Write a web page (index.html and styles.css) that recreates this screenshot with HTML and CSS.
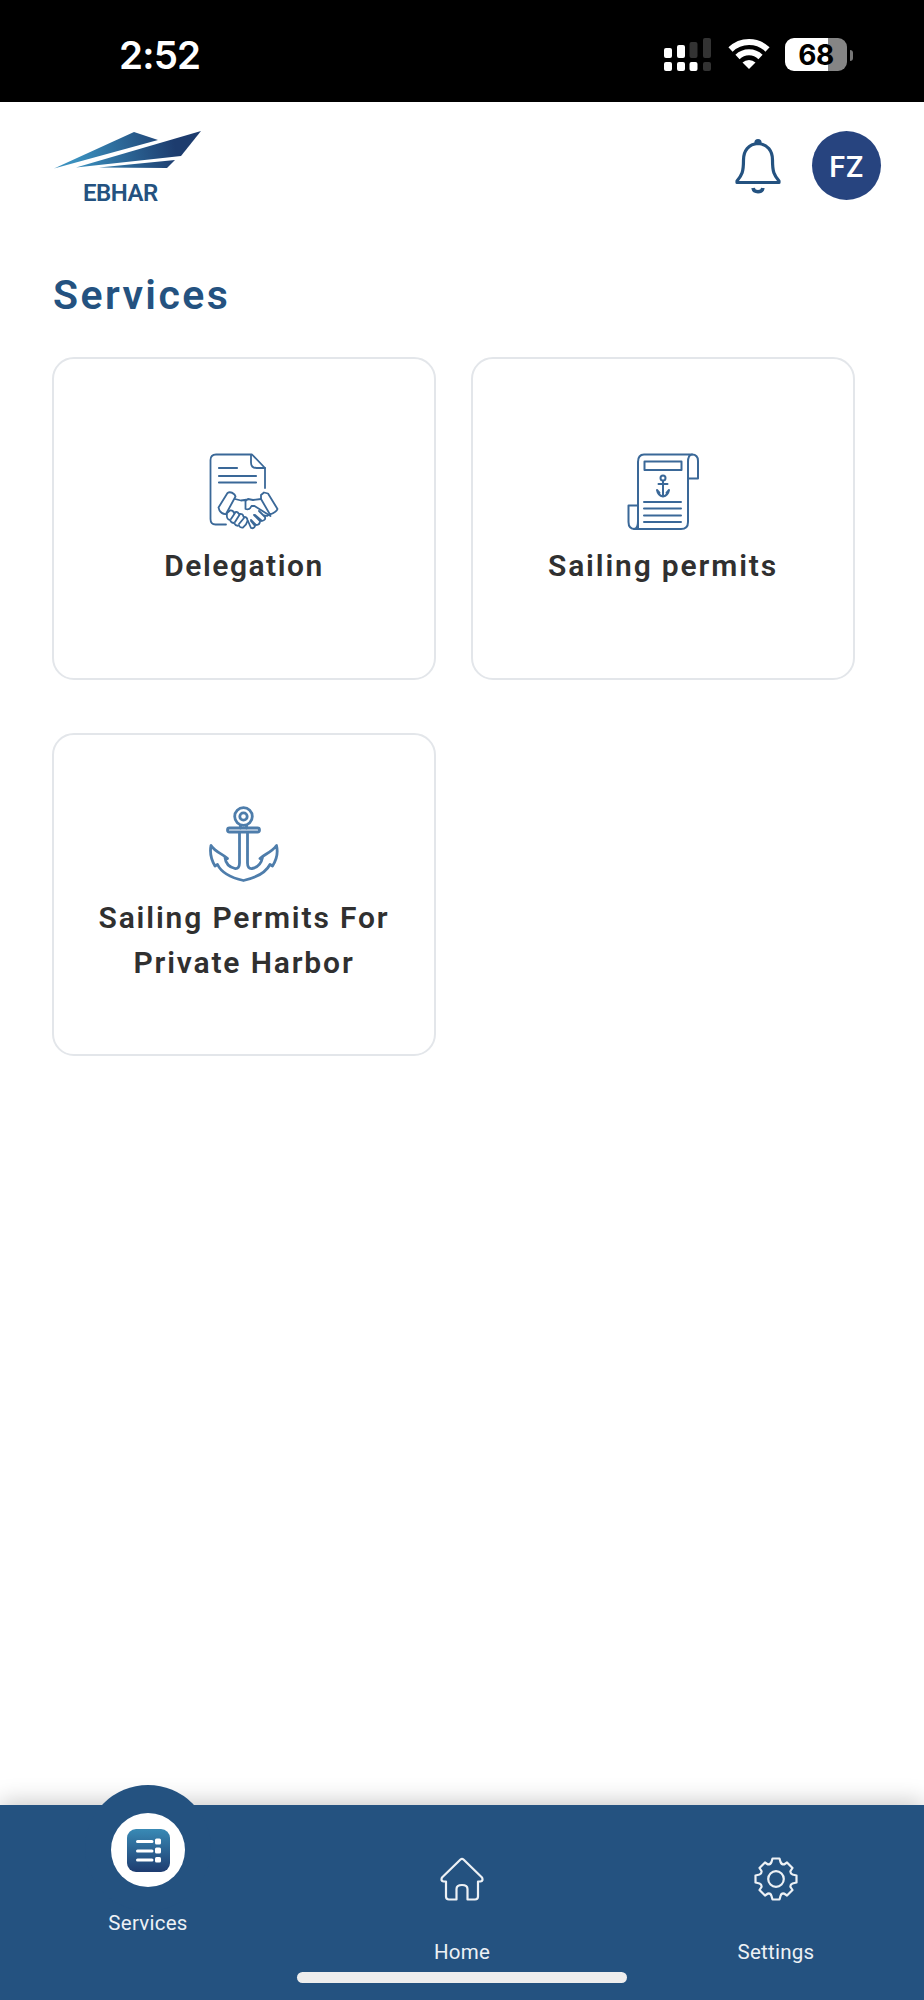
FILE: index.html
```html
<!DOCTYPE html>
<html lang="en">
<head>
<meta charset="utf-8">
<title>Ebhar – Services</title>
<link rel="stylesheet" href="styles.css">
</head>
<body>
<div class="screen">
  <div class="status">
    <span class="clock">2:52</span>
    <div class="indicators">
      <svg class="signal" width="48" height="34" viewBox="0 0 48 34">
        <g fill="#fff"><rect x="0" y="10" width="8" height="10" rx="2"/><rect x="13" y="7" width="8" height="13" rx="2"/><rect x="0" y="24" width="8" height="9" rx="2"/><rect x="13" y="24" width="8" height="9" rx="2"/><rect x="25.500" y="24" width="8" height="9" rx="2"/></g>
        <g fill="#333"><rect x="25.500" y="4" width="8" height="16" rx="2"/><rect x="39" y="0" width="8" height="20" rx="2"/><rect x="39" y="24" width="8" height="9" rx="2"/></g>
      </svg>
      <svg class="wifi" width="42" height="32" viewBox="0 0 42 32">
        <g fill="none" stroke="#fff" stroke-width="6"><path d="M2.500 11.500a26.500 26.500 0 0 1 37 0"/><path d="M9.500 19a16.500 16.500 0 0 1 23 0"/></g>
        <path d="M14.500 24.500a9.500 9.500 0 0 1 13 0L21 31z" fill="#fff"/>
      </svg>
      <div class="battery">68</div>
      <span class="nub"></span>
    </div>
  </div>

  <header class="header">
    <div class="brand">
      <svg class="brand-mark" width="150" height="39" viewBox="0 0 150 39">
        <defs><linearGradient id="hull" x1="0" y1="30" x2="150" y2="0" gradientUnits="userSpaceOnUse"><stop offset=".15" stop-color="#3a8fbd"/><stop offset=".8" stop-color="#1d3c6e"/></linearGradient></defs>
        <g fill="url(#hull)"><path d="M1 38.500 81 2l24 8Z"/><path d="M23 37.500 148 1 128 26Z"/><path d="M46 37.500 122 30l-8 8Z"/></g>
      </svg>
      <span class="brand-name">EBHAR</span>
    </div>
    <div class="actions">
      <svg width="46" height="56" viewBox="0 0 46 56" fill="none" stroke="#245280" stroke-width="3.200" stroke-linecap="round" stroke-linejoin="round">
        <path d="M23 5.500C13.500 6 8.500 13 8.500 22c0 12-1.500 15-6.500 21v1.500h42V43c-5-6-6.500-9-6.500-21C37.500 13 32.500 6 23 5.500Z"/><path d="M21 4.500a2 2 0 0 1 4 0"/><path d="M18 50c1 5 9 5 10 0" stroke-width="3.600" stroke-linecap="butt"/>
      </svg>
      <div class="avatar">FZ</div>
    </div>
  </header>

  <main class="main">
    <h1 class="title">Services</h1>
    <div class="grid">
      <div class="card short">
        <svg width="70" height="79" viewBox="0 0 70 79" fill="none" stroke="#3a6898" stroke-width="1.800" stroke-linecap="round" stroke-linejoin="round">
          <path d="M17 71.500H6.500Q1.500 71.500 1.500 66V7Q1.500 1.500 7 1.500H43L56 15V35"/><path d="M42 2V9.500Q42 15 47.500 15H56"/>
          <path d="M10 15H28M10 23H47M10 29.500H47" stroke-width="2.200"/>
          <path d="m10.500 57.500-1-3 9-14.500q3-2 7 1.500l1 2L17 61q-4 .5-6.500-3.500Z"/>
          <path d="m52 42 3-2.500 4 1 9.500 15.500q-1 3-7.500 5.500L52 46Z"/>
          <path d="m26 46 6 1.500 7-1M52 46l-8 1-5-1-2.500 2v8q4 1.500 6-3l3 0 16 10"/>
          <path d="m18 60 3-2.500q3-.5 4 2.500 3-2.500 5 1 4-1 4.500 3 4-.5 4 4-1 4-4.500 6.500-3 .5-4-2-3 1-5-2.500-3 0-4-3-4-.5-3-7Z"/>
          <path d="m26 60-4 6M31 61l-5 8M35 65l-5 6M39 68l3 7q3 1 4-2l-4-5M42 67l5 5q4 0 4-4l-6-6M46 62l7 6q4-1 3-4l-6-6M54 62l4 1 3-2"/>
        </svg>
        <p class="label delegation">Delegation</p>
      </div>
      <div class="card short">
        <svg width="72" height="79" viewBox="0 0 72 79" fill="none" stroke="#3a6898" stroke-width="2" stroke-linecap="round" stroke-linejoin="round">
          <path d="M11 76V9Q11 1.500 17 1.500H65Q61 2 61 9V69Q61 76 54 76H8Q1.500 76 1.500 69V52.500H11"/><path d="M61 25.500H71V8Q71 1.500 65 1.500M11 68Q11 76 7 76"/>
          <rect x="17.500" y="8.500" width="37" height="8.500"/><path d="M17 49H54M17 55.500H54M17 62.500H54M17 69H54"/>
          <circle cx="36" cy="25" r="2.500"/><path d="M36 28V43M31.500 31H40.500M30 37Q31 42.500 36 43.500 41 42.500 42 37L39.500 40M30 37l2.500 3"/>
        </svg>
        <p class="label permits">Sailing permits</p>
      </div>
      <div class="card">
        <svg width="70" height="76" viewBox="0 0 70 76" fill="none" stroke="#4e7dab" stroke-width="2.800" stroke-linejoin="round" stroke-linecap="round">
          <circle cx="34.500" cy="10.500" r="8.800"/><circle cx="34.500" cy="10.500" r="3.700"/>
          <rect x="18.500" y="22" width="32" height="4" rx="2"/>
          <path d="M31.500 19.500v2.500M37.500 19.500v2.500M30.500 27V57Q30.500 63 26 62.500 17 60.500 16 51.500L18.500 52.500C14 48 6 46 2 39.500Q0 50 6 60L8.500 58.500Q14 70 34.500 74.500 55 70 61 58.500L63.500 60Q70 50 67.500 39.500C63 46 56 48 51 52.500L53.500 51.500Q51.500 61 43 62.500 38.500 63 38.500 57V27"/>
        </svg>
        <p class="label harbor">Sailing Permits For<br>Private Harbor</p>
      </div>
    </div>
  </main>

  <nav class="nav">
    <div class="tab active">
      <div class="bump"></div>
      <div class="disc">
        <svg width="43" height="43" viewBox="0 0 43 43">
          <defs><linearGradient id="tile" x2="0" y2="1"><stop stop-color="#398ab5"/><stop offset="1" stop-color="#1e3c70"/></linearGradient></defs>
          <rect width="43" height="43" rx="9" fill="url(#tile)"/>
          <g stroke="#fff" stroke-width="3" stroke-linecap="round"><path d="M10.500 12.500H25M10.500 22H25M10.500 31H25"/></g>
          <g fill="#fff"><rect x="28" y="9.500" width="6" height="6" rx="1.500"/><rect x="28" y="18.500" width="6" height="6" rx="1.500"/><rect x="28" y="28" width="6" height="5.500" rx="1.500"/></g>
        </svg>
      </div>
      <span class="tab-label">Services</span>
    </div>
    <div class="tab">
      <svg width="44" height="44" viewBox="0 0 44 44" fill="none" stroke="#edf1f5" stroke-width="2.200" stroke-linejoin="round">
        <path d="M20.500 2.500Q22 1.200 23.500 2.500L42 20.500Q43.500 24 40.500 24.500H38V39.500Q38 42.500 35 42.500H27.500V32Q27.500 28 22 28 16.500 28 16.500 32V42.500H9Q6 42.500 6 39.500V24.500H3.500Q.500 24 2 20.500Z"/>
      </svg>
      <span class="tab-label">Home</span>
    </div>
    <div class="tab">
      <svg width="44" height="44" viewBox="0 0 44 44" fill="none" stroke="#edf1f5" stroke-width="2.200" stroke-linejoin="round">
        <path d="M17.500 5 18.500 1.500H25.500L26.500 5Q27.500 7.500 30 7.500L33 5.500 38.500 11 36.500 14Q36 16.500 38.500 17.500L42.500 18.500V25.500L38.500 26.500Q36 27.500 36.500 30L38.500 33 33 38.500 30 36.500Q27.500 36 26.500 39L25.500 42.500H18.500L17.500 39Q16.500 36 14 36.500L11 38.500 5.500 33 7.500 30Q8 27.500 5.500 26.500L1.500 25.500V18.500L5.500 17.500Q8 16.500 7.500 14L5.500 11 11 5.500 14 7.500Q16.500 7.500 17.500 5Z"/><circle cx="22" cy="22" r="7.800"/>
      </svg>
      <span class="tab-label">Settings</span>
    </div>
    <div class="home-indicator"></div>
  </nav>
</div>
</body>
</html>
```

FILE: styles.css
```css
* { box-sizing: border-box; }
body { margin: 0; background: #fff; font-family: Roboto, "Liberation Sans", sans-serif; }
svg { display: block; flex: none; }
.screen { width: 924px; height: 2000px; display: flex; flex-direction: column; overflow: hidden; background: #fff; }

.status { height: 102px; flex: none; background: #000; color: #fff; display: flex; justify-content: space-between; padding: 0 71px 0 119px; font-family: Inter, sans-serif; }
.clock { font-size: 38.500px; font-weight: 600; line-height: 40px; padding-top: 35px; letter-spacing: -.8px; }
.indicators { display: flex; padding-top: 38px; align-items: flex-start; }
.wifi { margin-left: 16px; }
.battery { margin-left: 15px; width: 62px; height: 33px; border-radius: 9px; background: linear-gradient(90deg, #fff 43px, #858585 43px); color: #000; font-size: 28px; font-weight: 700; line-height: 34px; text-align: center; letter-spacing: -.5px; }
.nub { width: 3px; height: 11px; margin: 12px 0 0 3px; border-radius: 0 3px 3px 0; background: #777; }

.header { height: 156px; flex: none; display: flex; justify-content: space-between; padding: 28px 43px 0 53px; }
.brand { width: 150px; }
.brand-name { display: block; margin-top: 9px; padding-left: 30px; font-size: 24px; font-weight: 600; line-height: 30px; color: #245280; letter-spacing: -.500px; }
.actions { display: flex; gap: 31px; }
.actions svg { margin-top: 8px; }
.avatar { width: 69px; height: 69px; margin-top: 1px; border-radius: 50%; background: #27447f; color: #fff; font: 600 28px/73px Inter, sans-serif; text-align: center; }

.main { flex: 1; padding: 12px 69px 0 52px; }
.title { margin: 0 0 37px 1px; font-size: 41px; font-weight: 600; line-height: 50px; letter-spacing: 2.400px; color: #245280; }
.grid { display: grid; grid-template-columns: 384px 384px; grid-auto-rows: 323px; gap: 53px 35px; }
.card { border: 2px solid #e3e6ea; border-radius: 22px; display: flex; flex-direction: column; align-items: center; justify-content: center; gap: 13px; padding-top: 2px; }
.card.short { padding-top: 4px; gap: 11px; }
.label { margin: 0; font-size: 30px; font-weight: 600; line-height: 45.500px; text-align: center; color: #303030; }
.delegation { letter-spacing: 1.500px; }
.permits, .harbor { letter-spacing: 1.850px; }

.nav { position: relative; height: 195px; flex: none; display: grid; grid-template-columns: 296px 332px 296px; background: #245280; color: #edf1f5; box-shadow: 0 -3px 22px rgba(0,0,0,.22); }
.tab { position: relative; display: flex; flex-direction: column; align-items: center; padding-top: 52px; }
.tab.active { padding-top: 8px; }
.bump { position: absolute; top: -20px; left: 85px; width: 126px; height: 126px; border-radius: 50%; background: #245280; }
.disc { position: relative; width: 74px; height: 74px; border-radius: 50%; background: #fff; display: flex; align-items: center; justify-content: center; }
.tab-label { font-size: 20.500px; line-height: 30px; margin-top: 36px; letter-spacing: .25px; }
.active .tab-label { position: relative; margin-top: 21px; }
.home-indicator { position: absolute; left: 297px; top: 167px; width: 330px; height: 11px; border-radius: 6px; background: #eee; }
```
